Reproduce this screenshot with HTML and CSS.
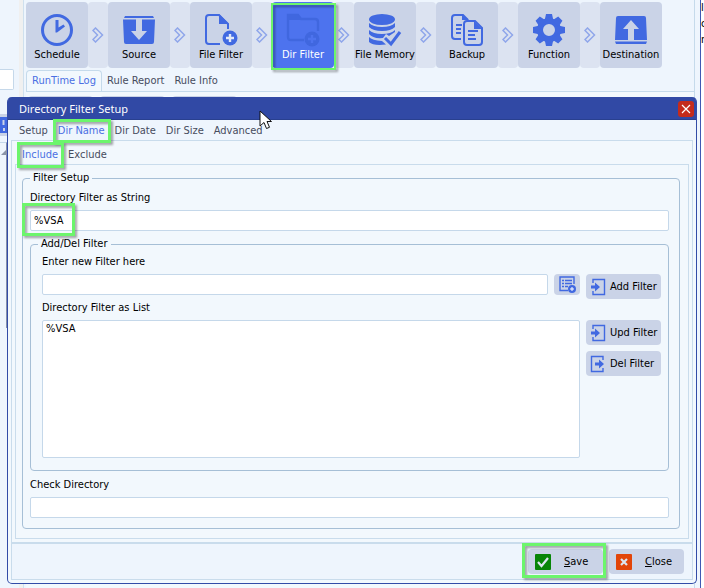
FILE: index.html
```html
<!DOCTYPE html>
<html lang="en">
<head>
<meta charset="utf-8">
<title>Directory Filter Setup</title>
<link rel="stylesheet" href="styles.css">
</head>
<body>
<svg class="defs" aria-hidden="true">
  <symbol id="chevrons" viewBox="0 0 12 16"><path d="M1 3.500 3.500 1 10.500 8l-7 7L1 12.500 5.500 8z" fill="none" stroke="#8fa6ea" stroke-width="1.500"/></symbol>
  <symbol id="plus-badge" viewBox="0 0 16 16"><circle cx="8" cy="8" r="7.500" fill="currentColor"/><path d="M8 4v8M4 8h8" stroke="#e3e9f6" stroke-width="2.400"/></symbol>
  <symbol id="door-in" viewBox="0 0 16 18"><path d="M3 5V1.500h11.500v15H3V13" fill="none" stroke="currentColor" stroke-width="1.400"/><path d="M1 7.500h4V4.500L10 9l-5 4.500v-3H1z" fill="currentColor"/></symbol>
</svg>

<div class="app">
  <aside class="side">
    <input class="side-search" type="text" aria-label="Search">
    <div class="side-tools"><svg viewBox="0 0 8 18"><path d="M0 1h7v16H0z" fill="#4169e1"/><path d="M3.500 4v5" stroke="#cad3e7" stroke-width="2"/><path d="M3 12h2v3H3z" fill="#cad3e7"/></svg></div>
    <div class="side-list"><svg viewBox="0 0 6 6"><path d="M6 0v6H0z" fill="#8c95a8"/></svg></div>
  </aside>
  <div class="grip"></div>
  <main class="workspace">
    <nav class="steps" aria-label="Rule steps">
      <button class="step"><svg viewBox="0 0 32 32"><circle cx="16" cy="16" r="14.500" fill="none" stroke="currentColor" stroke-width="3"/><path d="M14.500 6h3v7.500l5-3 1.500 2-8 6h-1.500z" fill="currentColor"/></svg>Schedule</button>
      <span class="sep"><svg><use href="#chevrons"/></svg></span>
      <button class="step"><svg viewBox="0 0 32 32"><path d="M2 2h28l1 2H1z" fill="currentColor"/><path d="M0 5.500h13V17H8l8 9 8-9h-5V5.500h13L31 28q0 2-2 2H3q-2 0-2-2z" fill="currentColor"/></svg>Source</button>
      <span class="sep"><svg><use href="#chevrons"/></svg></span>
      <button class="step"><svg viewBox="0 0 32 32"><path d="M15 30H4q-3 0-3-3V4q0-3 3-3h10l9 9v5" fill="none" stroke="currentColor" stroke-width="2"/><path d="M14 0l10 10H14z" fill="currentColor"/><use href="#plus-badge" x="17" y="16" width="16" height="16"/></svg>File Filter</button>
      <span class="sep"><svg><use href="#chevrons"/></svg></span>
      <button class="step active"><svg viewBox="0 0 32 32"><path d="M17 26H4q-3 0-3-3V1h10l3 4h14q3 0 3 3v9" fill="none" stroke="currentColor" stroke-width="2.400"/><path d="M1 1h10l3 5H1z" fill="currentColor"/><circle cx="25" cy="25" r="7.500" fill="currentColor"/><path d="M25 21v8M21 25h8" stroke="#4d73ee" stroke-width="2.400"/></svg>Dir Filter<span class="mark mark-step"></span></button>
      <span class="sep"><svg><use href="#chevrons"/></svg></span>
      <button class="step"><svg viewBox="0 0 32 32"><ellipse cx="13" cy="5.500" rx="13" ry="5.500" fill="currentColor"/><path d="M0 9q4 4 13 4t13-4v4q-4 4-13 4T0 13zM0 16q4 4 13 4t13-4v2l-6 4-3-2-3 4Q4 25 0 20zM0 23q3 3.500 13 4l4 3.500Q4 32 0 28z" fill="currentColor"/><path d="m16 24 6 6 9-12" fill="none" stroke="currentColor" stroke-width="3"/></svg>File Memory</button>
      <span class="sep"><svg><use href="#chevrons"/></svg></span>
      <button class="step"><svg viewBox="0 0 32 32"><g fill="none" stroke="currentColor" stroke-width="2"><path d="M10 25H4q-3 0-3-3V4q0-3 3-3h8l5 5M5 11h6M5 15h5M5 19h5"/><path d="M16 7h8l7 7v14q0 3-3 3H16q-3 0-3-3V10q0-3 3-3zM17 17h10M17 21h7M17 25h8"/></g><path d="M11 1l7 5h-7zM23 7l8 8h-8z" fill="currentColor"/></svg>Backup</button>
      <span class="sep"><svg><use href="#chevrons"/></svg></span>
      <button class="step"><svg viewBox="0 0 32 32"><circle cx="16" cy="16" r="9" fill="none" stroke="currentColor" stroke-width="6"/><g fill="currentColor"><path id="tooth" d="M13 0h6l1.500 7h-9zM13 32h6l1.500-7h-9z"/><use href="#tooth" transform="rotate(45 16 16)"/><use href="#tooth" transform="rotate(90 16 16)"/><use href="#tooth" transform="rotate(135 16 16)"/></g></svg>Function</button>
      <span class="sep"><svg><use href="#chevrons"/></svg></span>
      <button class="step"><svg viewBox="0 0 32 32"><path d="M0 27.500h32l-1 2.500H1z" fill="currentColor"/><path d="M3 2h26q2 0 2 2l1 22H19V15h5l-8-9-8 9h5v11H0L1 4q0-2 2-2z" fill="currentColor"/></svg>Destination</button>
    </nav>
    <div class="log-tabs"><button class="tab active">RunTime Log</button><button class="tab">Rule Report</button><button class="tab">Rule Info</button></div>
    <div class="log-page"><span></span><span></span><span></span></div>
  </main>
  <aside class="output"><p>l</p><p>c</p><p>n</p></aside>
</div>

<section class="dialog" role="dialog" aria-labelledby="dialog-title">
  <header class="titlebar">
    <h1 id="dialog-title">Directory Filter Setup</h1>
    <button class="close-x" aria-label="Close window"><svg viewBox="0 0 10 10"><path d="m1 1 8 8M9 1 1 9" stroke="#fff" stroke-width="1.200"/></svg></button>
    <svg class="cursor" viewBox="0 0 13 20"><path d="M1 1v15l4-3.500 2.500 6 3-1.200L8 11.500h4.500z" fill="#fff" stroke="#111" stroke-width="1"/></svg>
  </header>
  <div class="tabs"><button class="tab">Setup</button><button class="tab active">Dir Name<span class="mark mark-name"></span></button><button class="tab">Dir Date</button><button class="tab">Dir Size</button><button class="tab">Advanced</button></div>
  <div class="page">
    <div class="tabs subtabs"><button class="tab active">Include<span class="mark mark-include"></span></button><button class="tab">Exclude</button></div>
    <div class="subpage">
      <fieldset class="group">
        <legend>Filter Setup</legend>
        <label for="filter-string">Directory Filter as String</label>
        <div class="marked"><input id="filter-string" class="field" type="text" value="%VSA"><span class="mark mark-field"></span></div>
        <fieldset class="group editor">
          <legend>Add/Del Filter</legend>
          <div class="editor-grid">
            <label for="new-filter">Enter new Filter here</label>
            <div class="new-row">
              <input id="new-filter" class="field" type="text">
              <button class="btn pick" aria-label="Insert variable"><svg viewBox="0 0 17 17"><path d="M9 14.500H1V1h14v7" fill="none" stroke="currentColor" stroke-width="1.400"/><path d="M3 4.500h2M3 7.500h2M3 10.500h2M6 4.500h7M6 7.500h7M6 10.500h3" stroke="currentColor" stroke-width="1.700"/><circle cx="13" cy="13" r="4" fill="currentColor"/><path d="M13 11v4M11 13h4" stroke="#fff"/></svg></button>
            </div>
            <button class="btn"><svg viewBox="0 0 16 18"><use href="#door-in"/></svg>Add Filter</button>
            <label class="list-label" for="filter-list">Directory Filter as List</label>
            <select id="filter-list" class="list" size="8"><option>%VSA</option></select>
            <div class="list-actions">
              <button class="btn"><svg viewBox="0 0 16 18"><use href="#door-in"/></svg>Upd Filter</button>
              <button class="btn"><svg viewBox="0 0 16 18"><path d="M13 5V1.500H1.500v15H13V13" fill="none" stroke="currentColor" stroke-width="1.400"/><path d="M5 7.500h4V4.500L14 9l-5 4.500v-3H5z" fill="currentColor"/></svg>Del Filter</button>
            </div>
          </div>
        </fieldset>
        <label for="check-dir">Check Directory</label>
        <input id="check-dir" class="field" type="text">
      </fieldset>
    </div>
  </div>
  <footer class="actions">
    <button class="btn action"><svg viewBox="0 0 16 16"><rect width="16" height="16" rx="1" fill="#078507"/><path d="m3 8 3.500 4L13 4" fill="none" stroke="#dce5f0" stroke-width="2.200"/></svg><span><u>S</u>ave</span><span class="mark mark-save"></span></button>
    <button class="btn action"><svg viewBox="0 0 16 16"><rect width="16" height="16" rx="1" fill="#e24509"/><path d="m5 5 6 6M11 5l-6 6" stroke="#dce5f0" stroke-width="2.200"/></svg><span><u>C</u>lose</span></button>
  </footer>
</section>
</body>
</html>
```

FILE: styles.css
```css
* { box-sizing: border-box; }

body {
  margin: 0;
  min-height: 100vh;
  position: relative;
  overflow: hidden;
  background: #eef5fd;
  color: #000;
  font: 11px/16px Tahoma, "DejaVu Sans Condensed", sans-serif;
}

button, input, select { font: inherit; color: inherit; }
button { border: 0; padding: 0; background: none; white-space: nowrap; }
svg { display: block; flex: none; }
.defs { position: absolute; width: 0; height: 0; }

/* Main window */
.app { display: flex; min-height: 100vh; }
.side { width: 19px; padding-top: 69px; }
.side-search { display: block; width: 14px; height: 21px; border: 1px solid #c5d8ea; border-left: 0; border-radius: 0 2px 2px 0; background: #fff; }
.side-tools { height: 22px; margin-top: 24px; padding: 2px 0; background: #cad3e7; }
.side-tools svg { width: 8px; height: 18px; }
.side-list { width: 7px; height: 186px; margin-top: 6px; border-top: 1px solid #c5d8ea; border-right: 1px solid #8590ab; padding: 6px 0 0 1px; }
.side-list svg { width: 6px; height: 6px; }
.grip { width: 5px; background: #f0f0f0; border-right: 1px solid #cfe0ee; }
.workspace { flex: 1; display: flex; flex-direction: column; min-width: 0; padding: 2px 0 0 2px; border-right: 1px solid #c5daeb; }

.steps { display: flex; height: 66px; }
.step { position: relative; display: flex; flex-direction: column; align-items: center; width: 62px; padding-top: 12px; border-radius: 4px; background: #cad3e7; }
.step svg { width: 32px; height: 32px; margin-bottom: 1px; color: #4169e1; overflow: visible; }
.step.active { background: #4d73ee; color: #fff; }
.step.active > svg { color: #4067df; }
.sep { display: flex; width: 20px; align-items: center; justify-content: center; border-radius: 4px; background: #dce3f1; }
.sep svg { width: 12px; height: 16px; }

.tab { color: #474c5e; }
.tab.active { position: relative; color: #4a6fe3; }
.log-tabs { display: flex; align-items: center; height: 22px; margin-top: 2px; border-bottom: 1px solid #c5daeb; }
.log-tabs .tab { padding: 0 5px; }
.log-tabs .tab.active { align-self: stretch; width: 76px; border: 1px solid #c5daeb; border-bottom: 0; border-radius: 4px 4px 0 0; background: #f2f8fd; }
.log-page { flex: 1; display: flex; gap: 7px; padding: 4px 2px; background: #f2f8fd; }
.log-page span { width: 65px; height: 25px; border-radius: 4px; background: #cad3e7; }

.output { width: 9px; border-left: 5px solid #eef5fd; background: #fff; overflow: hidden; }
.output p { margin: 0; border-left: 1px solid #4059b4; }
.output p:last-child { height: 100%; }

/* Dialog window */
.dialog {
  position: absolute;
  inset: 97px 7px 4px;
  display: flex;
  flex-direction: column;
  border: 1px solid #324ba7;
  border-top: 0;
  border-radius: 5px;
  background: #f2f8fd;
}
.titlebar { position: relative; display: flex; align-items: center; justify-content: space-between; height: 23px; padding: 1px 2px 0 11px; border-radius: 4px 4px 0 0; background: #3149a5; border-bottom: 1px solid #29408f; }
.titlebar h1 { margin: 0; color: #fff; font: 11px/16px "Segoe UI", "Noto Sans", sans-serif; }
.close-x { display: grid; place-items: center; width: 16px; height: 16px; border-radius: 3px; background: #c42b1c; }
.close-x svg { width: 10px; height: 10px; }
.cursor { position: absolute; left: 251px; top: 13px; width: 13px; height: 20px; z-index: 2; }

.tabs { display: flex; align-items: center; height: 20px; gap: 10px; padding: 2px 11px 0; background: #eef5fd; }
.page { flex: 1; display: flex; flex-direction: column; margin: 0 3px; padding: 0 3px 3px; border: 1px solid #c9dcec; border-bottom: 0; }
.subtabs { height: 23px; padding: 4px 7px 0; background: none; }
.subpage { flex: 1; display: flex; padding: 5px 8px 9px 6px; border: 1px solid #c9dcec; }

.group { flex: 1; display: flex; flex-direction: column; min-width: 0; margin: 0; padding: 4px 10px 10px 7px; border: 1px solid #a6bfd6; border-radius: 4px; }
.group legend { padding: 0 3px; }
.group label { display: block; height: 16px; margin-bottom: 4px; }
.field { display: block; width: 100%; min-width: 0; height: 21px; padding: 0 3px; border: 1px solid #c5d8ea; border-radius: 2px; background: #fff; outline: 0; }
.marked { position: relative; }
.editor { margin: 5px 0 6px; padding: 2px 7px 12px 11px; }
.editor legend { margin-left: -4px; }
.editor-grid { flex: 1; display: grid; grid-template-columns: minmax(0, 1fr) 75px; grid-template-rows: auto auto auto 1fr; column-gap: 6px; }
.editor-grid > label { grid-column: 1 / -1; }
.editor-grid > .list-label { margin-top: 1px; }
.new-row { display: flex; gap: 6px; }
.list { width: 100%; height: 100%; padding: 1px 0; border: 1px solid #c5d8ea; background: #fff; outline: 0; overflow: hidden; }
.list option { padding: 0 3px; min-height: 14px; }
.list-actions { display: flex; flex-direction: column; gap: 6px; }

.btn { position: relative; display: flex; align-items: center; height: 25px; padding: 0 4px; border-radius: 4px; background: #cad3e7; gap: 4px; }
.btn svg { width: 16px; height: 18px; color: #4169e1; }
.pick { flex: none; justify-content: center; width: 26px; height: 21px; }
.pick svg { width: 17px; height: 17px; }

.actions { display: flex; justify-content: flex-end; gap: 6px; height: 38px; margin: 0 3px 3px; padding: 5px 8px; border: 1px solid #c9dcec; border-top-width: 2px; background: #eef5fd; }
.action { width: 75px; padding: 0 7px; gap: 13px; }
.action svg { width: 16px; height: 16px; }

/* Highlight frames laid over controls */
.mark { position: absolute; z-index: 1; border: 3px solid #6cf56c; filter: drop-shadow(2px 2px 1px rgba(0, 0, 0, .35)); pointer-events: none; }
.mark-step { inset: 1px -2px -2px -1px; border-width: 2px; }
.mark-name { inset: -4px -6px -4px -5px; }
.mark-include { inset: -5px -6px -5px -5px; }
.mark-field { left: -8px; top: -7px; width: 53px; height: 33px; }
.mark-save { inset: -6px -3px -4px -6px; }
```
